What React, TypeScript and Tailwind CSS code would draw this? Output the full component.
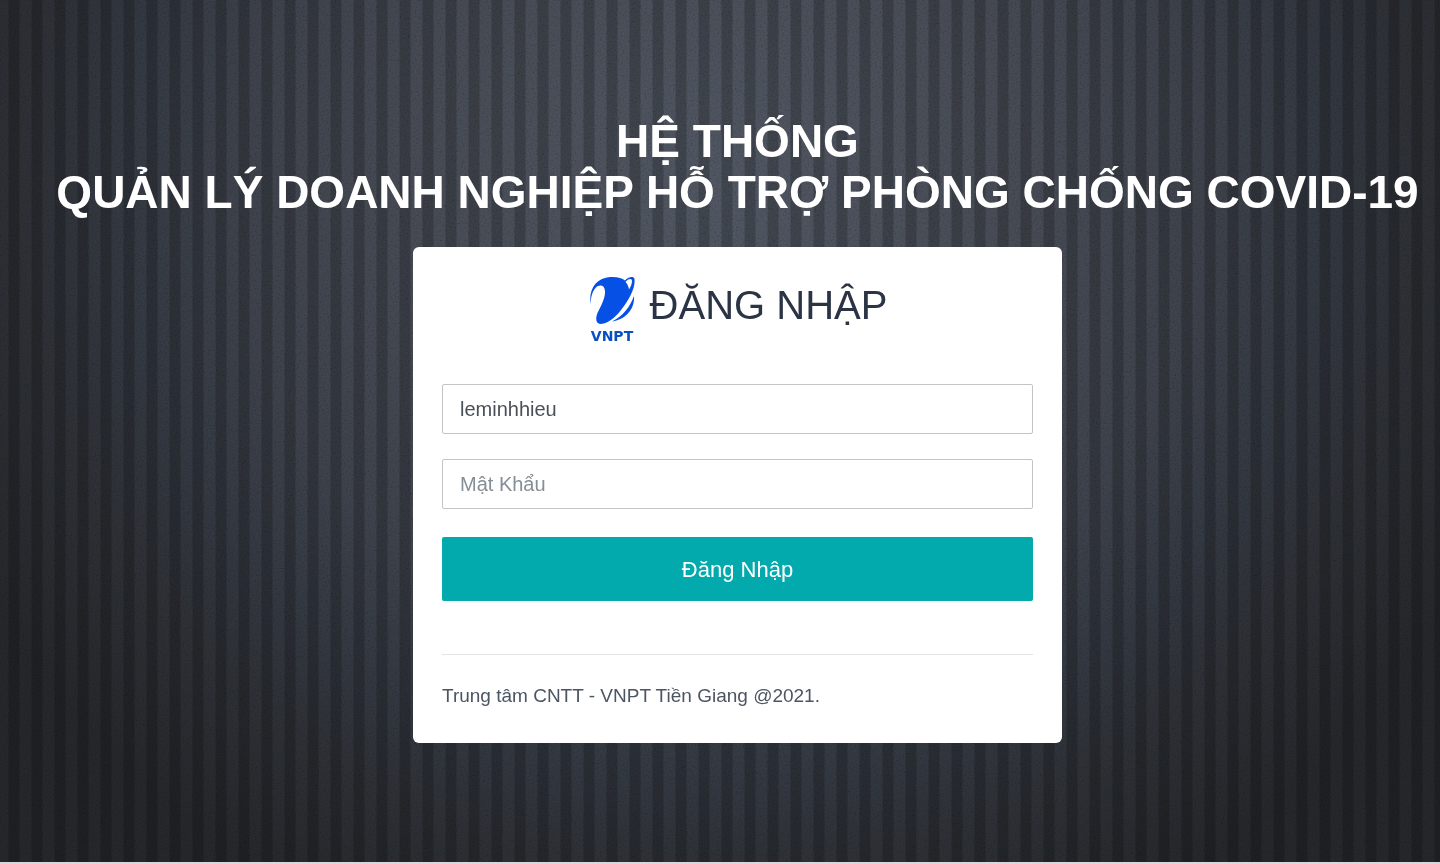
import { useState } from "react";

function VnptLogo() {
  return (
    <svg viewBox="0 0 50 70" className="h-[70px] w-[50px] shrink-0" role="img" aria-label="VNPT">
      <path
        d="M2.500 28C0.500 12 9 2 22 1C29 0.500 34 2 37 4.500C40 1 45.500 -0.500 46.500 3C47.500 12 41 24 33 34C27 42 19 48 12 48C7.500 47 7.500 42 9.500 37C13 30 17.500 22 17 15C16.500 9 11.500 8 7.500 12C4 16 3 21 2.500 28Z"
        fill="#0650e6"
      />
      <path d="M37.500 6C40 2.500 44 2 44 5C44 8 42.500 11 41 13.500C40.500 10.500 39.500 8 37.500 6Z" fill="#fff" />
      <path d="M46 20C47 32 39 43 24 45.500C35 40 42 31 46 20Z" fill="#0650e6" />
      <text
        x="24"
        y="65"
        textAnchor="middle"
        fontFamily="DejaVu Sans, sans-serif"
        fontWeight="bold"
        fontSize="14"
        fill="#0a50c4"
      >
        VNPT
      </text>
    </svg>
  );
}

// Woven grain laid over the striped backdrop
function Grain() {
  return (
    <svg className="pointer-events-none absolute inset-0 h-full w-full opacity-10 mix-blend-overlay" aria-hidden="true">
      <filter id="grain">
        <feTurbulence type="fractalNoise" baseFrequency="0.6" numOctaves={2} />
        <feColorMatrix values="2 0 0 0 -0.5  2 0 0 0 -0.5  2 0 0 0 -0.5  0 0 0 0 1" />
      </filter>
      <rect width="100%" height="100%" filter="url(#grain)" />
    </svg>
  );
}

export default function App() {
  const [username, setUsername] = useState("leminhhieu");
  const [password, setPassword] = useState("");

  return (
    <div className="relative min-h-screen overflow-hidden border-b-2 border-[#d8d8dc] bg-[#222428] bg-[radial-gradient(ellipse_58%_95%_at_50%_22%,#4b515c_0%,#42464f_35%,#393d46_58%,#30353d_71%,#292c31_84%,#222428_100%)] font-['Liberation_Sans',Arial,sans-serif]">
      <div className="absolute inset-0 bg-[repeating-linear-gradient(90deg,transparent_0px,transparent_8px,rgba(0,0,0,0.2)_9px,rgba(0,0,0,0.2)_19px,transparent_20px,transparent_23px)]" />
      <Grain />

      <main className="relative flex flex-col items-center pt-[116px] pl-[35px]">
        <h1 className="text-center text-[46px] leading-[51px] font-bold whitespace-nowrap text-white">
          HỆ THỐNG
          <br />
          QUẢN LÝ DOANH NGHIỆP HỖ TRỢ PHÒNG CHỐNG COVID-19
        </h1>

        <section className="mt-[29px] w-full max-w-[649px] rounded-md bg-white px-[29px] pt-[29px] pb-[33px]">
          <div className="flex justify-center gap-3">
            <VnptLogo />
            <h2 className="text-[40px] leading-[58px] text-[#2b3445]">ĐĂNG NHẬP</h2>
          </div>

          <form className="mt-[38px]" onSubmit={(e) => e.preventDefault()}>
            <input
              type="text"
              aria-label="Tài Khoản"
              value={username}
              onChange={(e) => setUsername(e.target.value)}
              className="block h-[50px] w-full rounded-xs border border-[#c4c4c4] bg-white px-[17px] text-xl text-[#495057] outline-none"
            />
            <input
              type="password"
              aria-label="Mật Khẩu"
              placeholder="Mật Khẩu"
              value={password}
              onChange={(e) => setPassword(e.target.value)}
              className="mt-[25px] block h-[50px] w-full rounded-xs border border-[#c4c4c4] bg-white px-[17px] text-xl text-[#495057] outline-none placeholder:text-[#868e96]"
            />
            <button
              type="submit"
              className="mt-7 block h-16 w-full rounded-xs bg-[#02a9ad] text-[22px] text-white"
            >
              Đăng Nhập
            </button>
          </form>

          <hr className="mt-[53px] border-[#e3e3e3]" />
          <p className="mt-[27px] text-[19px] leading-7 text-[#4b5563]">Trung tâm CNTT - VNPT Tiền Giang @2021.</p>
        </section>
      </main>
    </div>
  );
}
